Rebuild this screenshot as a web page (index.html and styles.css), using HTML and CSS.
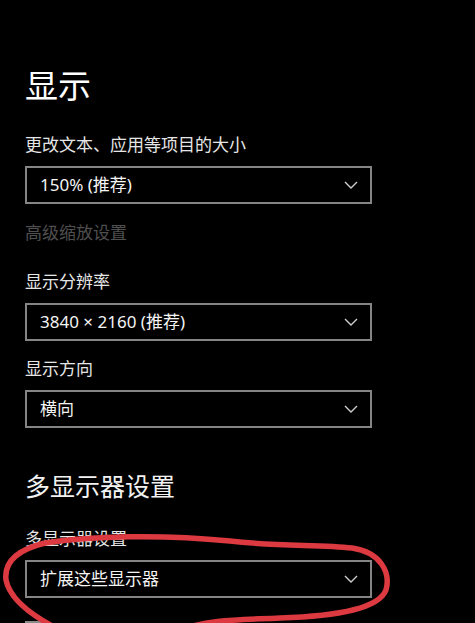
FILE: index.html
```html
<!DOCTYPE html>
<html lang="zh-CN">
<head>
<meta charset="utf-8">
<title>显示</title>
<link rel="stylesheet" href="styles.css">
</head>
<body>
<main class="page">
  <h1 class="title">显示</h1>

  <div class="field field-first">
    <div class="label">更改文本、应用等项目的大小</div>
    <div class="select">
      <span class="value">150% (推荐)</span>
      <svg class="chev" width="14" height="8" viewBox="0 0 14 8"><path d="M1 1 L7 7 L13 1" fill="none" stroke="#cfcfcf" stroke-width="1.4"/></svg>
    </div>
  </div>

  <div class="link">高级缩放设置</div>

  <div class="field field-res">
    <div class="label">显示分辨率</div>
    <div class="select">
      <span class="value">3840 × 2160 (推荐)</span>
      <svg class="chev" width="14" height="8" viewBox="0 0 14 8"><path d="M1 1 L7 7 L13 1" fill="none" stroke="#cfcfcf" stroke-width="1.4"/></svg>
    </div>
  </div>

  <div class="field field-orient">
    <div class="label">显示方向</div>
    <div class="select">
      <span class="value">横向</span>
      <svg class="chev" width="14" height="8" viewBox="0 0 14 8"><path d="M1 1 L7 7 L13 1" fill="none" stroke="#cfcfcf" stroke-width="1.4"/></svg>
    </div>
  </div>

  <h2 class="subtitle">多显示器设置</h2>

  <div class="field field-multi">
    <div class="label">多显示器设置</div>
    <div class="select">
      <span class="value">扩展这些显示器</span>
      <svg class="chev" width="14" height="8" viewBox="0 0 14 8"><path d="M1 1 L7 7 L13 1" fill="none" stroke="#cfcfcf" stroke-width="1.4"/></svg>
    </div>
  </div>

  <div class="check-row">
    <span class="checkbox"></span>
  </div>
</main>

<svg class="annotation" width="475" height="623" viewBox="0 0 475 623">
  <path d="M45 543 C 90 536 160 534 230 541 C 280 547 320 544 352 548 C 380 552 391 572 386 590 C 379 608 340 616 280 618 C 240 620 210 619 180 630 L 60 630 C 32 616 10 600 6 580 C 4 563 16 550 45 543 Z" fill="none" stroke="#dc3a40" stroke-width="5.5" stroke-linecap="round" stroke-linejoin="round"/>
</svg>
</body>
</html>
```

FILE: styles.css
```css
html, body {
  margin: 0;
  padding: 0;
  background: #000;
  height: 100%;
  overflow: hidden;
}

body {
  font-family: "Noto Sans", "Noto Sans CJK SC", sans-serif;
  color: #fff;
  position: relative;
}

.page {
  padding: 62px 0 0 25px;
  display: flex;
  flex-direction: column;
  align-items: flex-start;
}

.title {
  margin: 0;
  font-family: "Noto Sans CJK SC", sans-serif;
  font-weight: 400;
  font-size: 33px;
  line-height: 44px;
  color: #fff;
}

.subtitle {
  margin: 40px 0 0;
  font-family: "Noto Sans CJK SC", sans-serif;
  font-weight: 400;
  font-size: 25px;
  line-height: 34px;
  color: #f2f2f2;
}

.field {
  display: flex;
  flex-direction: column;
}

.field-first { margin-top: 26px; }
.field-res { margin-top: 25px; }
.field-orient { margin-top: 15px; }
.field-multi { margin-top: 24px; }

.label {
  font-family: "Noto Sans CJK SC", sans-serif;
  font-size: 17px;
  line-height: 24px;
  color: #e6e6e6;
  margin-bottom: 10px;
}

.select {
  box-sizing: border-box;
  width: 347px;
  height: 38px;
  border: 2px solid #858585;
  background: #000;
  display: flex;
  align-items: center;
  justify-content: space-between;
  padding: 0 12px 0 13px;
}

.value {
  font-size: 17px;
  line-height: 24px;
  color: #f4f4f4;
}

.chev {
  display: block;
}

.link {
  margin-top: 16px;
  font-family: "Noto Sans CJK SC", sans-serif;
  font-size: 17px;
  line-height: 24px;
  color: #4f4f4f;
}

.check-row {
  margin-top: 23px;
  display: flex;
}

.checkbox {
  display: block;
  width: 20px;
  height: 20px;
  box-sizing: border-box;
  border: 2px solid #8a8a8a;
}

.annotation {
  position: absolute;
  left: 0;
  top: 0;
  pointer-events: none;
}
```
